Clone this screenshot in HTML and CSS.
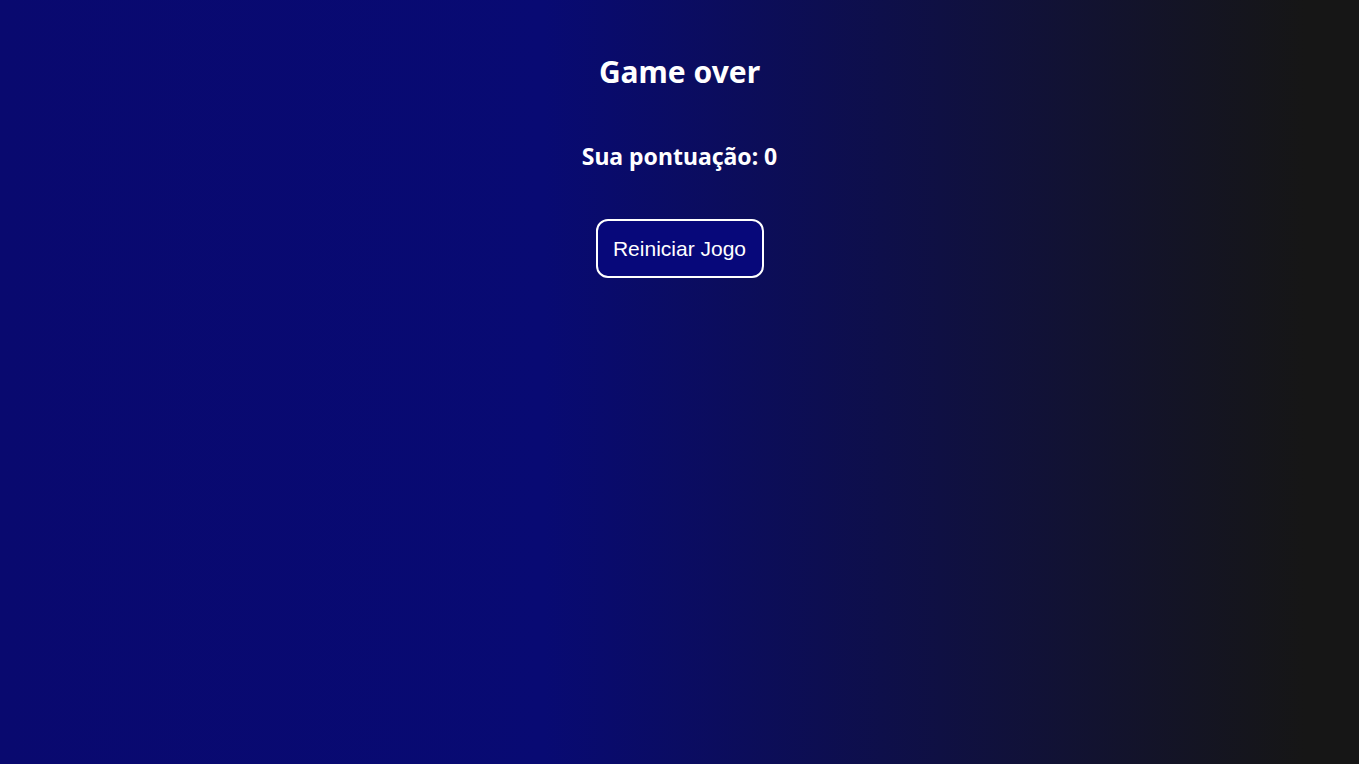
FILE: index.html
```html
<!DOCTYPE html>
<html lang="pt-BR">
<head>
<meta charset="utf-8">
<title>Game over</title>
<link rel="stylesheet" href="styles.css">
</head>
<body>
<main class="screen">
  <h1 class="title">Game over</h1>
  <h2 class="score">Sua pontuação: 0</h2>
  <button class="restart" type="button">Reiniciar Jogo</button>
</main>
</body>
</html>
```
FILE: styles.css
```css
html, body {
  margin: 0;
  height: 100%;
}
body {
  background: linear-gradient(90deg, #09096f 0%, #080a73 40%, #0e0f4a 65%, #161616 96%, #161616 100%);
  color: #ffffff;
  font-family: "Noto Sans", "Open Sans", sans-serif;
}
.screen {
  display: flex;
  flex-direction: column;
  align-items: center;
  padding-top: 52px;
}
.title {
  margin: 0;
  font-size: 30px;
  font-weight: 700;
  line-height: 40px;
}
.score {
  margin: 49px 0 0;
  font-size: 23px;
  font-weight: 700;
  line-height: 30px;
}
.restart {
  margin-top: 48px;
  width: 168px;
  height: 59px;
  background: #07087a;
  color: #ffffff;
  border: 2px solid #ffffff;
  border-radius: 12px;
  font-family: "Liberation Sans", Arial, sans-serif;
  font-size: 21px;
  cursor: pointer;
}
```
